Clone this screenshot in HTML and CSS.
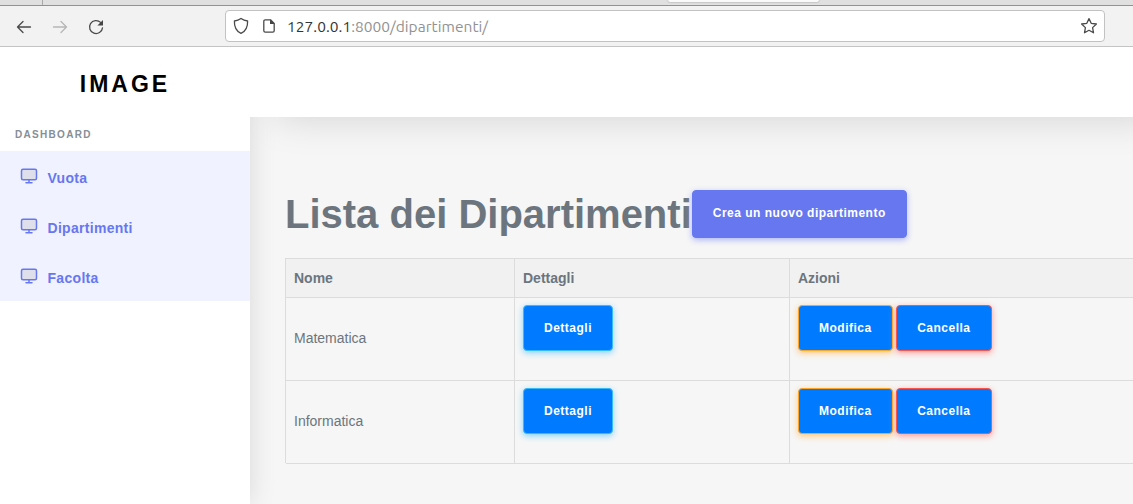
FILE: index.html
```html
<!DOCTYPE html>
<html lang="it">
<head>
<meta charset="utf-8">
<title>Lista dei Dipartimenti</title>
<link rel="stylesheet" href="styles.css">
</head>
<body>
<svg class="defs" width="0" height="0">
  <symbol id="monitor" viewBox="0 0 24 24"><rect x="2" y="3" width="20" height="14" rx="2"/><path d="M8 21h8M12 17v4"/></symbol>
</svg>
<div class="tabstrip"><span class="tab-sep"></span><span class="tab-active"></span></div>
<div class="toolbar">
  <div class="nav">
    <svg width="16" height="16" viewBox="0 0 16 16"><path d="M14.500 8H1.500M7 2.500 1.500 8 7 13.500"/></svg>
    <svg class="off" width="16" height="16" viewBox="0 0 16 16"><path d="M1.500 8h13M9 2.500 14.500 8 9 13.500"/></svg>
    <svg width="16" height="16" viewBox="0 0 16 16"><path d="M12.600 3.400A6.500 6.500 0 1 0 14.500 8.800"/><path class="solid" d="M15 1v5.600H9.400z"/></svg>
  </div>
  <div class="url">
    <svg width="16" height="18" viewBox="0 0 16 18"><path d="M8 1.500C10 3 12.500 3.800 14.600 4c.2 5.200-1.300 10-6.600 12.400C2.700 14 1.200 9.200 1.400 4 3.500 3.800 6 3 8 1.500z"/></svg>
    <svg class="page" width="14" height="16" viewBox="0 0 14 16"><path d="M8.500 1.800H3.200c-.8 0-1.400.6-1.400 1.400v9.600c0 .8.600 1.400 1.400 1.400h7.600c.8 0 1.400-.6 1.400-1.400V5.500z"/><path class="solid" d="M8 1.500 12.700 6H8z"/></svg>
    <span class="address"><b>127.0.0.1</b>:8000/dipartimenti/</span>
    <svg class="star" width="18" height="18" viewBox="0 0 18 18"><path d="M9 1.600l2.200 4.700 5.200.7-3.800 3.600.9 5.200L9 13.300l-4.500 2.500.9-5.200L1.600 7l5.200-.7z"/></svg>
  </div>
</div>
<div class="app">
  <aside class="sidebar">
    <div class="brand">IMAGE</div>
    <div class="section">DASHBOARD</div>
    <a class="item"><svg width="18" height="18"><use href="#monitor"/></svg><span>Vuota</span></a>
    <a class="item"><svg width="18" height="18"><use href="#monitor"/></svg><span>Dipartimenti</span></a>
    <a class="item"><svg width="18" height="18"><use href="#monitor"/></svg><span>Facolta</span></a>
  </aside>
  <main class="main">
    <div class="topbar"></div>
    <div class="content">
      <div class="heading"><h1>Lista dei Dipartimenti</h1><a class="btn create">Crea un nuovo dipartimento</a></div>
      <div class="table">
        <div class="row head"><div>Nome</div><div>Dettagli</div><div>Azioni</div></div>
        <div class="row"><div class="name">Matematica</div><div><a class="btn info">Dettagli</a></div><div><a class="btn warn">Modifica</a><a class="btn danger">Cancella</a></div></div>
        <div class="row"><div class="name">Informatica</div><div><a class="btn info">Dettagli</a></div><div><a class="btn warn">Modifica</a><a class="btn danger">Cancella</a></div></div>
      </div>
    </div>
  </main>
</div>
</body>
</html>
```
FILE: styles.css
```css
* { box-sizing: border-box; }
body { margin: 0; height: 504px; overflow: hidden; display: flex; flex-direction: column; font-family: "Liberation Sans", Arial, sans-serif; font-size: 14px; color: #6c757d; background: #f6f6f6; }
svg { flex: none; fill: none; stroke: #4a4a4a; stroke-width: 1.3; stroke-linecap: round; stroke-linejoin: round; }
.defs { position: absolute; }
.solid { fill: #444; stroke: none; }
.tabstrip { flex: none; height: 6px; background: #e0e0e0; border-bottom: 1px solid #929292; display: flex; align-items: flex-start; }
.tab-sep { width: 1px; height: 5px; margin-left: 42px; background: #aaa; }
.tab-active { width: 151px; height: 2px; margin-left: 625px; background: #fafafa; border-radius: 0 0 4px 4px; box-shadow: 0 0 2px #888; }
.toolbar { position: relative; z-index: 2; flex: none; height: 41px; background: #f2f2f2; border-bottom: 1px solid #c4c4c4; display: flex; padding: 4px 28px 4px 16px; }
.nav { display: flex; width: 209px; gap: 20px; align-items: center; padding-top: 1px; }
.off { opacity: .35; }
.url { flex: none; width: 880px; height: 32px; display: flex; align-items: center; background: #fff; border: 1px solid #c2c2c2; border-radius: 4px; padding: 0 6px 0 7px; }
.page { margin-left: 13px; }
.address { margin-left: 11px; font: 15.5px/30px Ubuntu, "Noto Sans", sans-serif; color: #929292; padding-top: 1px; white-space: nowrap; letter-spacing: .03px; }
.address b { font-weight: 400; color: #333; }
.star { margin-left: auto; }
.app { flex: 1; display: flex; min-height: 0; }
.sidebar { flex: none; width: 250px; background: #fff; box-shadow: 0 0 26px rgba(0,0,0,.12); }
.brand { height: 72px; line-height: 75px; text-align: center; font-size: 23px; font-weight: 700; letter-spacing: 3px; color: #000; }
.section { height: 32px; padding: 10px 15px 0; line-height: 12px; font-size: 10px; font-weight: 700; letter-spacing: 1.3px; color: #868e96; }
.item { height: 50px; display: flex; align-items: center; padding-left: 19.5px; gap: 10px; background: #f0f2ff; color: #6777ef; font-weight: 700; letter-spacing: .3px; }
.item svg { stroke: #6777ef; stroke-width: 2; fill: #dedfea; }
.item span { padding-top: 4px; }
.main { flex: 1; min-width: 0; }
.topbar { position: relative; height: 70px; background: #fff; box-shadow: 25px 0 40px rgba(0,0,0,.15); clip-path: inset(0 0 -50px 0); }
.content { padding: 73px 0 0 35px; }
.heading { display: flex; height: 68px; }
h1 { margin: 0; font-size: 40px; line-height: 48px; color: #6c757d; white-space: nowrap; }
.btn { display: inline-block; height: 46px; padding: 0 20px; border: 1px solid; border-radius: 4px; line-height: 44px; color: #fff; background: #007bff; font-size: 12px; font-weight: 700; letter-spacing: .5px; white-space: nowrap; }
.create { height: 48px; line-height: 45px; background: #6777ef; border-color: #6777ef; box-shadow: 0 2px 6px #acb5f6; }
.info { border-color: #3abaf4; box-shadow: 0 2px 6px #82d3f8; }
.warn { border-color: #ffa426; box-shadow: 0 2px 6px #ffc473; margin-right: 3.5px; }
.danger { border-color: #fc544b; box-shadow: 0 2px 6px #fd9b96; }
.table { border: solid #dcdcdc; border-width: 1px 0 0 1px; }
.row { display: grid; grid-template-columns: 229px 275px 1fr; height: 83px; }
.row > div { padding: 8px; border: solid #dcdcdc; border-width: 0 1px 1px 0; white-space: nowrap; }
.row > div:last-child { border-right: 0; }
.head { height: 38px; background: #f1f1f1; font-weight: 700; }
.row > .name { line-height: 67px; }
.head > div { line-height: 22px; }
```
